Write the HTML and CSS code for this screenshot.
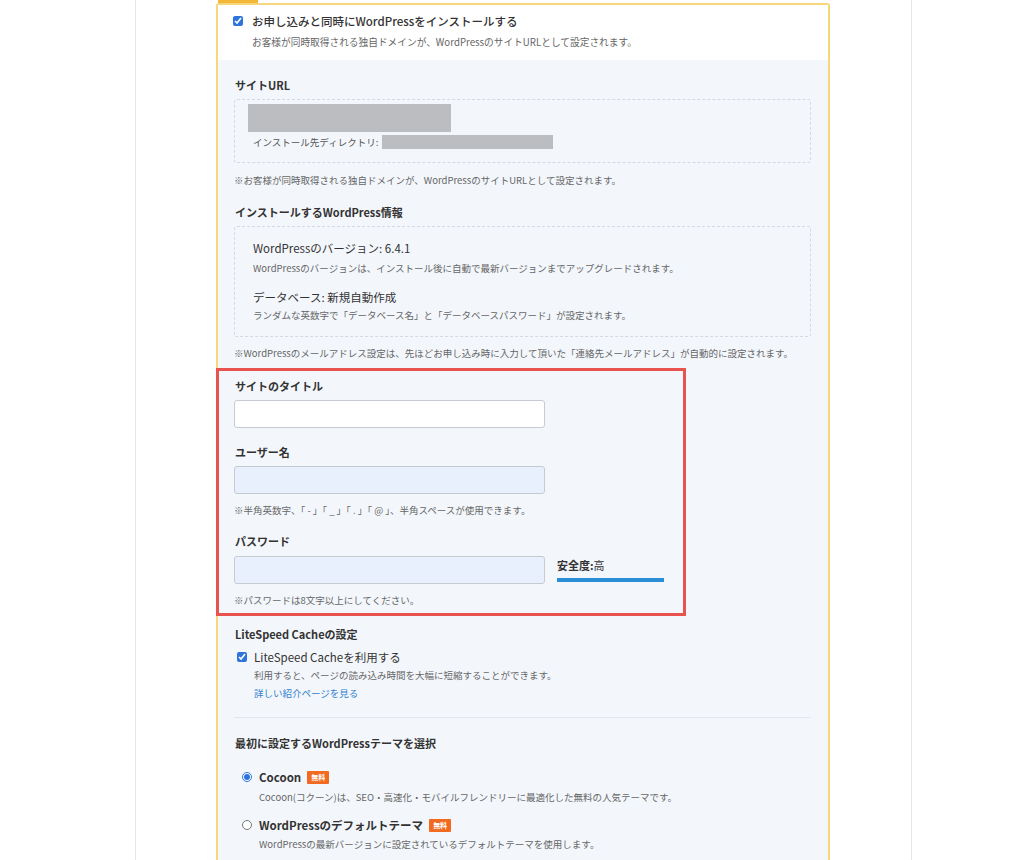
FILE: index.html
```html
<!DOCTYPE html>
<html lang="ja">
<head>
    <meta charset="UTF-8">
    <meta name="viewport" content="width=device-width, initial-scale=1.0">
    <title>WordPressインストール設定</title>
    <link rel="stylesheet" href="styles.css">
</head>
<body>
    <div class="page">
        <div class="tab"></div>
        <div class="install-box">

            <div class="install-head">
                <label class="check-row">
                    <input type="checkbox" checked>
                    <span>お申し込みと同時にWordPressをインストールする</span>
                </label>
                <p class="head-sub">お客様が同時取得される独自ドメインが、WordPressのサイトURLとして設定されます。</p>
            </div>

            <div class="install-body">
                <h3 class="heading first">サイトURL</h3>
                <div class="dash-box url-box">
                    <div class="redact redact-url"></div>
                    <div class="dir-row">インストール先ディレクトリ:<span class="redact redact-dir"></span></div>
                </div>
                <p class="note">※お客様が同時取得される独自ドメインが、WordPressのサイトURLとして設定されます。</p>

                <h3 class="heading">インストールするWordPress情報</h3>
                <div class="dash-box info-box">
                    <p class="info-title">WordPressのバージョン: 6.4.1</p>
                    <p class="info-sub">WordPressのバージョンは、インストール後に自動で最新バージョンまでアップグレードされます。</p>
                    <p class="info-title second">データベース: 新規自動作成</p>
                    <p class="info-sub tight">ランダムな英数字で「データベース名」と「データベースパスワード」が設定されます。</p>
                </div>
                <p class="note note-mail">※WordPressのメールアドレス設定は、先ほどお申し込み時に入力して頂いた「連絡先メールアドレス」が自動的に設定されます。</p>

                <!-- 入力欄 (赤枠で強調) -->
                <div class="highlight">
                    <h3 class="heading field-label first">サイトのタイトル</h3>
                    <input class="text-input" type="text">

                    <h3 class="heading field-label">ユーザー名</h3>
                    <input class="text-input filled" type="text">
                    <p class="note field-note">※半角英数字、「 - 」「 _ 」「 . 」「 @ 」、半角スペースが使用できます。</p>

                    <h3 class="heading field-label pw-label">パスワード</h3>
                    <div class="pw-row">
                        <input class="text-input filled" type="password">
                        <div class="strength">
                            <span class="strength-text">安全度:<span class="strength-level">高</span></span>
                            <div class="strength-bar"></div>
                        </div>
                    </div>
                    <p class="note field-note">※パスワードは8文字以上にしてください。</p>
                </div>

                <h3 class="heading cache-heading">LiteSpeed Cacheの設定</h3>
                <label class="check-row cache-row">
                    <input type="checkbox" checked>
                    <span>LiteSpeed Cacheを利用する</span>
                </label>
                <p class="cache-sub">利用すると、ページの読み込み時間を大幅に短縮することができます。</p>
                <a class="cache-link" href="#">詳しい紹介ページを見る</a>

                <hr class="divider">

                <h3 class="heading theme-heading">最初に設定するWordPressテーマを選択</h3>
                <label class="radio-row">
                    <input type="radio" name="theme" checked>
                    <span class="theme-name">Cocoon</span>
                    <span class="badge">無料</span>
                </label>
                <p class="theme-desc">Cocoon(コクーン)は、SEO・高速化・モバイルフレンドリーに最適化した無料の人気テーマです。</p>
                <label class="radio-row second">
                    <input type="radio" name="theme">
                    <span class="theme-name">WordPressのデフォルトテーマ</span>
                    <span class="badge">無料</span>
                </label>
                <p class="theme-desc tight">WordPressの最新バージョンに設定されているデフォルトテーマを使用します。</p>
            </div>
        </div>
    </div>
</body>
</html>
```

FILE: styles.css
```css
body {
    margin: 0;
    padding: 0;
    background-color: #fff;
    font-family: "Noto Sans CJK JP", "Noto Sans", sans-serif;
    color: #333;
}
p, h3 {
    margin: 0;
}
.page {
    margin-left: 135px;
    width: 775px;
    height: 860px;
    border-left: 1px solid #e6e6e6;
    border-right: 1px solid #e6e6e6;
    overflow: hidden;
}
.tab {
    margin-left: 82px;
    width: 40px;
    height: 3px;
    background-color: #f3b73a;
}
.install-box {
    margin-left: 80px;
    width: 610px;
    border: 2px solid #f7d77c;
    border-bottom: none;
    border-radius: 3px 3px 0 0;
    min-height: 900px;
    background-color: #f3f7fc;
}
.install-head {
    background-color: #fff;
    padding: 7px 0 0 15px;
    height: 48px;
}
.check-row {
    display: flex;
    align-items: center;
    height: 18px;
    font-size: 11.5px;
    font-weight: 500;
}
.check-row input {
    width: 10px;
    height: 10px;
    margin: 0 9px 0 0;
    accent-color: #2f74dc;
}
.head-sub {
    margin: 5px 0 0 19px;
    font-size: 9.7px;
    line-height: 14px;
    color: #666;
}
.install-body {
    padding: 17px 17px 0 16px;
}
.heading {
    font-size: 11px;
    font-weight: 700;
    line-height: 16px;
    margin-top: 17px;
    padding-left: 1px;
}
.heading.first {
    margin-top: 0;
}
.dash-box {
    margin-top: 6px;
    border: 1px dashed #d3d9e0;
    border-radius: 3px;
}
.url-box {
    height: 58px;
    padding: 4px 13px 0;
}
.redact {
    background-color: #bcbdc1;
}
.redact-url {
    width: 203px;
    height: 28px;
}
.dir-row {
    display: flex;
    align-items: center;
    margin-top: 2px;
    padding-left: 5px;
    height: 16px;
    font-size: 9.5px;
    color: #555;
}
.redact-dir {
    display: inline-block;
    width: 171px;
    height: 14px;
    margin-left: 4px;
}
.note {
    margin-top: 10px;
    font-size: 9.5px;
    line-height: 14px;
    color: #666;
}
.info-box {
    padding: 12px 18px 14px;
}
.info-title {
    font-size: 11.5px;
    line-height: 18px;
    color: #333;
}
.info-title.second {
    margin-top: 13px;
}
.info-sub {
    margin-top: 4px;
    font-size: 9.5px;
    line-height: 14px;
    color: #666;
}
.info-sub.tight {
    margin-top: 2px;
}
.note-mail {
    margin-top: 9px;
}
.highlight {
    margin: 8px 0 0 -18px;
    width: 449px;
    padding: 7px 0 6px 15px;
    border: 3px solid #e9534f;
    position: relative;
}
.field-label {
    margin-top: 16px;
}
.pw-label {
    margin-top: 16px;
}
.text-input {
    display: block;
    box-sizing: border-box;
    width: 311px;
    height: 28px;
    margin-top: 6px;
    border: 1px solid #c6cbd2;
    border-radius: 3px;
    background-color: #fff;
    font: inherit;
}
.text-input.filled {
    background-color: #e8f0fd;
}
.field-note {
    margin-top: 9px;
}
.pw-row {
    display: flex;
    align-items: flex-start;
    margin-top: 7px;
}
.pw-row .text-input {
    margin-top: 0;
}
.strength {
    margin-left: 12px;
    padding-top: 1px;
}
.strength-text {
    display: block;
    font-size: 11px;
    font-weight: 700;
    line-height: 16px;
}
.strength-level {
    font-weight: 400;
}
.strength-bar {
    margin-top: 5px;
    width: 107px;
    height: 4px;
    background-color: #2b8fd7;
}
.cache-heading {
    margin-top: 10px;
}
.cache-row {
    margin: 6px 0 0 3px;
    font-size: 11.5px;
    font-weight: 400;
}
.cache-row input {
    margin-right: 7px;
}
.cache-sub {
    margin: 2px 0 0 20px;
    font-size: 9.5px;
    line-height: 14px;
    color: #666;
}
.cache-link {
    display: block;
    margin: 4px 0 0 20px;
    font-size: 9.5px;
    line-height: 14px;
    color: #2f7fcf;
    text-decoration: none;
}
.divider {
    margin: 17px 0 0;
    border: none;
    border-top: 1px solid #e2e7ed;
}
.theme-heading {
    margin-top: 17px;
}
.radio-row {
    display: flex;
    align-items: center;
    height: 18px;
    margin: 17px 0 0 8px;
}
.radio-row.second {
    margin-top: 12px;
}
.radio-row input {
    width: 10px;
    height: 10px;
    margin: 0 7px 0 0;
    accent-color: #2f74dc;
}
.theme-name {
    font-size: 11.5px;
    font-weight: 700;
}
.badge {
    margin-left: 6px;
    padding: 0 4px;
    height: 13px;
    line-height: 13px;
    font-size: 7px;
    font-weight: 700;
    color: #fff;
    background-color: #f26a1f;
    border-radius: 1px;
}
.theme-desc {
    margin: 4px 0 0 25px;
    font-size: 9.5px;
    line-height: 14px;
    color: #666;
}
.theme-desc.tight {
    margin-top: 3px;
}
```
